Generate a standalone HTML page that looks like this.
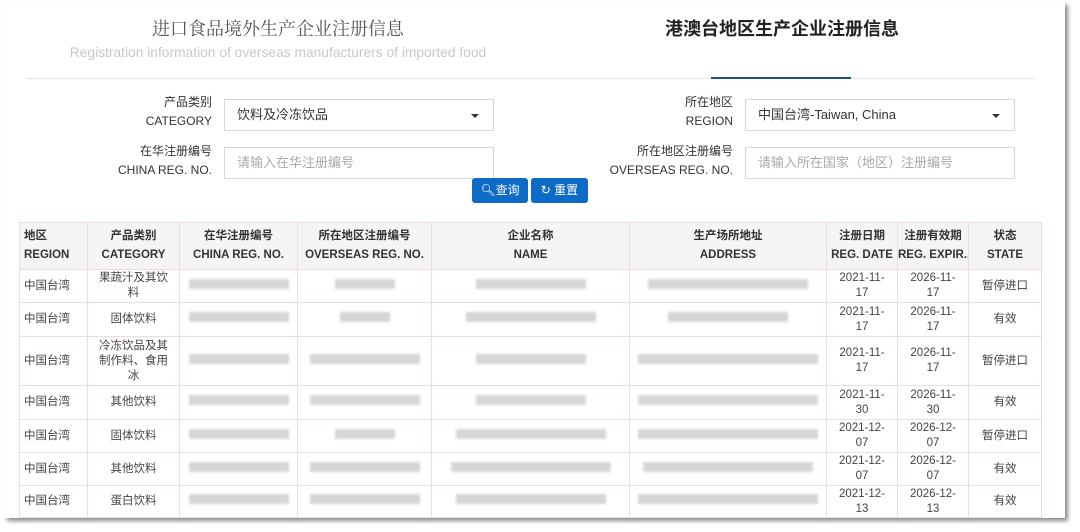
<!DOCTYPE html>
<html><head><meta charset="utf-8"><style>
*{margin:0;padding:0;box-sizing:border-box}
body{width:1080px;height:532px;background:#fff;font-family:"Liberation Sans","Noto Sans CJK SC",sans-serif;position:relative;overflow:hidden}
.card{position:absolute;left:4px;top:2px;width:1061px;height:516px;background:#fff;box-shadow:3px 3px 4px rgba(0,0,0,.45)}
.a{position:absolute}
.lbl{position:absolute;text-align:right;font-size:12px;color:#333;line-height:19px}
.box{position:absolute;border:1px solid #d8d8d8;background:#fff;font-size:13px;color:#333;padding-left:12px;line-height:30px;height:32px}
.box.ph{color:#aaa}
.car{position:absolute;right:14px;top:14px;border-left:4px solid transparent;border-right:4px solid transparent;border-top:4px solid #333}
.btn{position:absolute;background:#0d6bc7;color:#fff;font-size:12px;border-radius:3px;height:25px;line-height:25px;text-align:center}
table{position:absolute;left:19px;top:222px;border-collapse:collapse;table-layout:fixed;width:1022px;font-size:11.5px;color:#444}
td,th{border:1px solid #f0dcdc;text-align:center;line-height:15px;padding:0;overflow:hidden;white-space:nowrap}
th{background:#f5f5f5;color:#333;font-weight:bold;height:47px;font-size:11.5px;line-height:19px}
td:first-child,th:first-child{text-align:left;padding-left:4px}
.bl{display:inline-block;height:10px;background:#d6d6d6;filter:blur(1.2px)}
</style></head><body>
<div class="card"></div>
<div class="a" style="left:8px;width:540px;top:15px;text-align:center;font-family:'Noto Serif CJK SC','Liberation Serif',serif;font-size:18px;color:#555">进口食品境外生产企业注册信息</div>
<div class="a" style="left:0;width:556px;top:45px;text-align:center;font-size:13.8px;color:#c8c8c8">Registration information of overseas manufacturers of imported food</div>
<div class="a" style="left:532px;width:500px;top:15px;text-align:center;font-size:18px;font-weight:bold;color:#222;font-family:'Noto Sans CJK SC',sans-serif">港澳台地区生产企业注册信息</div>
<div class="a" style="left:26px;top:78px;width:1008px;height:1px;background:#e6e6e6"></div>
<div class="a" style="left:711px;top:77px;width:140px;height:2px;background:#1e4e8c"></div>

<div class="lbl" style="left:100px;width:112px;top:93px">产品类别<br>CATEGORY</div>
<div class="box" style="left:224px;top:99px;width:270px">饮料及冷冻饮品<span class="car"></span></div>
<div class="lbl" style="left:100px;width:112px;top:142px">在华注册编号<br>CHINA REG. NO.</div>
<div class="box ph" style="left:224px;top:147px;width:270px">请输入在华注册编号</div>
<div class="lbl" style="left:600px;width:133px;top:93px">所在地区<br>REGION</div>
<div class="box" style="left:745px;top:99px;width:270px">中国台湾-Taiwan, China<span class="car"></span></div>
<div class="lbl" style="left:600px;width:133px;top:142px">所在地区注册编号<br>OVERSEAS REG. NO.</div>
<div class="box ph" style="left:745px;top:147px;width:270px">请输入所在国家（地区）注册编号</div>
<div class="btn" style="left:472px;top:178px;width:56px">&#x1F50D;&#xFE0E;查询</div>
<div class="btn" style="left:531px;top:178px;width:57px">&#x21BB; 重置</div>

<table>
<colgroup><col style="width:68px"><col style="width:92px"><col style="width:118px"><col style="width:134px"><col style="width:198px"><col style="width:197px"><col style="width:71px"><col style="width:71px"><col style="width:73px"></colgroup>
<tr><th>地区<br>REGION</th><th>产品类别<br>CATEGORY</th><th>在华注册编号<br>CHINA REG. NO.</th><th>所在地区注册编号<br>OVERSEAS REG. NO.</th><th>企业名称<br>NAME</th><th>生产场所地址<br>ADDRESS</th><th>注册日期<br>REG. DATE</th><th>注册有效期<br>REG. EXPIR...</th><th>状态<br>STATE</th></tr>
<tr style="height:33px"><td>中国台湾</td><td>果蔬汁及其饮<br>料</td><td><span class="bl" style="width:100px"></span></td><td><span class="bl" style="width:60px"></span></td><td><span class="bl" style="width:110px"></span></td><td><span class="bl" style="width:160px"></span></td><td>2021-11-<br>17</td><td>2026-11-<br>17</td><td>暂停进口</td></tr>
<tr style="height:34px"><td>中国台湾</td><td>固体饮料</td><td><span class="bl" style="width:100px"></span></td><td><span class="bl" style="width:50px"></span></td><td><span class="bl" style="width:130px"></span></td><td><span class="bl" style="width:120px"></span></td><td>2021-11-<br>17</td><td>2026-11-<br>17</td><td>有效</td></tr>
<tr style="height:49px"><td>中国台湾</td><td>冷冻饮品及其<br>制作料、食用<br>冰</td><td><span class="bl" style="width:100px"></span></td><td><span class="bl" style="width:110px"></span></td><td><span class="bl" style="width:110px"></span></td><td><span class="bl" style="width:180px"></span></td><td>2021-11-<br>17</td><td>2026-11-<br>17</td><td>暂停进口</td></tr>
<tr style="height:34px"><td>中国台湾</td><td>其他饮料</td><td><span class="bl" style="width:100px"></span></td><td><span class="bl" style="width:110px"></span></td><td><span class="bl" style="width:110px"></span></td><td><span class="bl" style="width:180px"></span></td><td>2021-11-<br>30</td><td>2026-11-<br>30</td><td>有效</td></tr>
<tr style="height:33px"><td>中国台湾</td><td>固体饮料</td><td><span class="bl" style="width:100px"></span></td><td><span class="bl" style="width:60px"></span></td><td><span class="bl" style="width:150px"></span></td><td><span class="bl" style="width:180px"></span></td><td>2021-12-<br>07</td><td>2026-12-<br>07</td><td>暂停进口</td></tr>
<tr style="height:33px"><td>中国台湾</td><td>其他饮料</td><td><span class="bl" style="width:100px"></span></td><td><span class="bl" style="width:110px"></span></td><td><span class="bl" style="width:160px"></span></td><td><span class="bl" style="width:170px"></span></td><td>2021-12-<br>07</td><td>2026-12-<br>07</td><td>有效</td></tr>
<tr style="height:32px"><td>中国台湾</td><td>蛋白饮料</td><td><span class="bl" style="width:100px"></span></td><td><span class="bl" style="width:110px"></span></td><td><span class="bl" style="width:150px"></span></td><td><span class="bl" style="width:180px"></span></td><td>2021-12-<br>13</td><td>2026-12-<br>13</td><td>有效</td></tr>
</table>
</body></html>
